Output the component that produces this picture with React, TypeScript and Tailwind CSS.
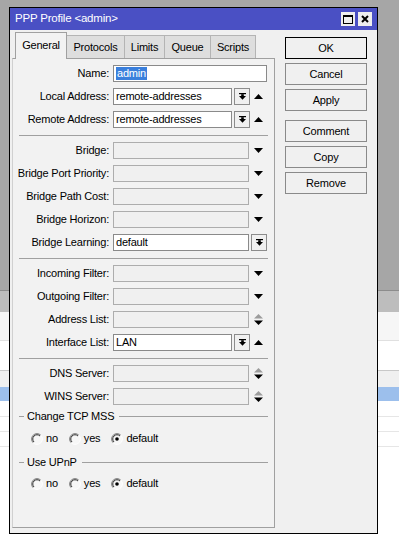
import React from "react";

type Kind = "full" | "comboUp" | "arrowDown" | "upDown" | "combo";

type Row = {
  label: string;
  kind: Kind;
  value?: string;
  white?: boolean;
  selected?: boolean;
};

const sections: Row[][] = [
  [
    { label: "Name:", kind: "full", value: "admin", white: true, selected: true },
    { label: "Local Address:", kind: "comboUp", value: "remote-addresses", white: true },
    { label: "Remote Address:", kind: "comboUp", value: "remote-addresses", white: true },
  ],
  [
    { label: "Bridge:", kind: "arrowDown" },
    { label: "Bridge Port Priority:", kind: "arrowDown" },
    { label: "Bridge Path Cost:", kind: "arrowDown" },
    { label: "Bridge Horizon:", kind: "arrowDown" },
    { label: "Bridge Learning:", kind: "combo", value: "default", white: true },
  ],
  [
    { label: "Incoming Filter:", kind: "arrowDown" },
    { label: "Outgoing Filter:", kind: "arrowDown" },
    { label: "Address List:", kind: "upDown" },
    { label: "Interface List:", kind: "comboUp", value: "LAN", white: true },
  ],
  [
    { label: "DNS Server:", kind: "upDown" },
    { label: "WINS Server:", kind: "upDown" },
  ],
];

const tabs = [
  { name: "General", w: "w-[52px]" },
  { name: "Protocols", w: "w-[58px]" },
  { name: "Limits", w: "w-[40px]" },
  { name: "Queue", w: "w-[46px]" },
  { name: "Scripts", w: "w-[45px]" },
];

function TriDown() {
  return (
    <svg width="9" height="5" viewBox="0 0 9 5">
      <path d="M0 0H9L4.5 5Z" fill="#000" />
    </svg>
  );
}

function TriUp() {
  return (
    <svg width="9" height="5" viewBox="0 0 9 5">
      <path d="M4.5 0L9 5H0Z" fill="#000" />
    </svg>
  );
}

function UpDown() {
  return (
    <svg width="9" height="11" viewBox="0 0 9 11">
      <path d="M4.5 0L9 4.5H0Z" fill="#9c9c9c" />
      <path d="M0 6.5H9L4.5 11Z" fill="#000" />
    </svg>
  );
}

function ComboBtn() {
  return (
    <div className="w-[16px] h-[17px] ml-[2px] border border-[#8c8c8c] bg-[#f0f0f0] flex items-center justify-center shrink-0">
      <svg width="7" height="7" viewBox="0 0 7 7">
        <rect x="0" y="0" width="7" height="1.2" fill="#000" />
        <rect x="2.2" y="1.2" width="2.6" height="2" fill="#000" />
        <path d="M0 3H7L3.5 6.8Z" fill="#000" />
      </svg>
    </div>
  );
}

function Input({ row, width }: { row: Row; width: string }) {
  return (
    <div
      className={`${width} h-[17px] shrink-0 border flex items-center px-[2px] overflow-hidden whitespace-nowrap ${
        row.white ? "bg-white border-[#8a8a8a]" : "bg-[#f0f0f0] border-[#adadad]"
      }`}
    >
      {row.value &&
        (row.selected ? (
          <span className="bg-[#3a7fdc] text-white leading-[13px] px-[1px]">{row.value}</span>
        ) : (
          <span className="text-black">{row.value}</span>
        ))}
    </div>
  );
}

function FieldRow({ row }: { row: Row }) {
  return (
    <div className="flex items-center h-[17px]">
      <div className="w-[96px] text-right text-black whitespace-nowrap">{row.label}</div>
      <div className="ml-[4px] w-[154px] flex items-center">
        {row.kind === "full" && <Input row={row} width="w-[154px]" />}
        {row.kind === "comboUp" && (
          <>
            <Input row={row} width="w-[119px]" />
            <ComboBtn />
            <div className="flex-1 flex justify-center">
              <TriUp />
            </div>
          </>
        )}
        {row.kind === "arrowDown" && (
          <>
            <Input row={row} width="w-[136px]" />
            <div className="flex-1 flex justify-center">
              <TriDown />
            </div>
          </>
        )}
        {row.kind === "upDown" && (
          <>
            <Input row={row} width="w-[136px]" />
            <div className="flex-1 flex justify-center">
              <UpDown />
            </div>
          </>
        )}
        {row.kind === "combo" && (
          <>
            <Input row={row} width="w-[136px]" />
            <ComboBtn />
          </>
        )}
      </div>
    </div>
  );
}

function Radio({ checked }: { checked?: boolean }) {
  return (
    <svg width="12" height="12" viewBox="0 0 12 12" className="shrink-0">
      <circle cx="6" cy="6" r="5" fill="#f7f7f7" />
      <path d="M2.2 9.8A5.3 5.3 0 0 1 9.8 2.2" stroke="#7a7a7a" strokeWidth="1" fill="none" />
      <path d="M3 9A4.2 4.2 0 0 1 9 3" stroke="#303030" strokeWidth="1" fill="none" />
      <path d="M9.8 2.2A5.3 5.3 0 0 1 2.2 9.8" stroke="#ffffff" strokeWidth="1" fill="none" />
      {checked && <circle cx="6" cy="6" r="1.8" fill="#000" />}
    </svg>
  );
}

function GroupHeader({ title }: { title: string }) {
  return (
    <div className="flex items-center h-[13px] ml-[6px] mr-[6px]">
      <div className="w-[5px] h-px bg-[#a0a0a0]" />
      <span className="ml-[3px] text-black whitespace-nowrap">{title}</span>
      <div className="flex-1 h-px bg-[#a0a0a0] ml-[5px]" />
    </div>
  );
}

function RadioRow() {
  const opts = [
    { t: "no", c: false },
    { t: "yes", c: false },
    { t: "default", c: true },
  ];
  return (
    <div className="flex items-center h-[13px] pl-[18px] gap-[11px]">
      {opts.map((o) => (
        <div key={o.t} className="flex items-center gap-[3px]">
          <Radio checked={o.c} />
          <span className="text-black">{o.t}</span>
        </div>
      ))}
    </div>
  );
}

function Separator() {
  return (
    <div className="h-[2px] ml-[6px] mr-[6px]">
      <div className="h-px mt-px bg-[#a0a0a0]" />
    </div>
  );
}

function Button({ label, def }: { label: string; def?: boolean }) {
  return (
    <div
      className={`h-[22px] flex items-center justify-center bg-[#f0f0f0] text-black border ${
        def ? "border-black" : "border-[#8a8a8a]"
      }`}
    >
      {label}
    </div>
  );
}

export default function App() {
  return (
    <div className="relative w-[399px] h-[550px] overflow-hidden bg-white font-['Liberation_Sans',Arial,sans-serif] text-[11px] tracking-[-0.2px]">
      {/* list view behind the dialog */}
      <div className="h-[290px] bg-[#a6a6a6]" />
      <div className="h-[22px] bg-[#bdbdbd] border-t border-[#8c8c8c]" />
      <div className="h-[29px] bg-[#f6f6f6] border-b border-[#e0e0e0]" />
      <div className="h-[30px] bg-white border-b border-[#c8c8c8]" />
      <div className="h-[16px] bg-[#f0f0f0]" />
      <div className="h-[14px] bg-[#9cbfec]" />
      <div className="h-[16px] bg-white border-b border-[#e6e6e6]" />
      <div className="h-[15px] bg-white border-b border-[#e6e6e6]" />
      <div className="h-[15px] bg-white border-b border-[#e6e6e6]" />

      {/* dialog window */}
      <div className="absolute left-[9px] top-[7px] w-[369px] h-[527px] border border-black bg-[#f0f0f0] flex flex-col">
        <div className="h-[22px] bg-[#4a50c4] flex items-center pl-[5px] pr-[5px]">
          <span className="text-white text-[11.5px]">PPP Profile &lt;admin&gt;</span>
          <div className="ml-auto flex gap-[3px]">
            <div className="w-[14px] h-[14px] bg-[#eeeeee] flex items-center justify-center">
              <svg width="10" height="9" viewBox="0 0 10 9">
                <rect x="0.5" y="0.5" width="9" height="8" fill="none" stroke="#000" strokeWidth="1" />
                <rect x="0" y="0" width="10" height="2" fill="#000" />
              </svg>
            </div>
            <div className="w-[14px] h-[14px] bg-[#eeeeee] flex items-center justify-center">
              <svg width="8" height="8" viewBox="0 0 8 8">
                <path d="M1 1L7 7M7 1L1 7" stroke="#000" strokeWidth="2" />
              </svg>
            </div>
          </div>
        </div>

        <div className="flex flex-1">
          {/* tabs + panel */}
          <div className="ml-[2px] w-[263px] flex flex-col">
            <div className="h-[28px] pl-[3px] flex items-end">
              {tabs.map((t, i) =>
                i === 0 ? (
                  <div
                    key={t.name}
                    className={`${t.w} h-[27px] -mb-px relative z-10 bg-[#f2f2f2] border-l border-t border-r border-[#a0a0a0] flex items-center justify-center pb-[2px] text-black`}
                  >
                    {t.name}
                  </div>
                ) : (
                  <div
                    key={t.name}
                    className={`${t.w} h-[23px] bg-[#dedede] border-t border-r border-[#b4b4b4] flex items-center justify-center text-black`}
                  >
                    {t.name}
                  </div>
                )
              )}
            </div>
            <div className="h-[470px] border border-[#a0a0a0] border-l-[#d0d0d0] bg-[#f2f2f2] pt-[6px]">
              <div className="flex flex-col gap-[6px]">
                {sections.map((sec, si) => (
                  <React.Fragment key={si}>
                    {si > 0 && <Separator />}
                    {sec.map((r) => (
                      <FieldRow key={r.label} row={r} />
                    ))}
                  </React.Fragment>
                ))}
              </div>
              <div className="mt-[5px]">
                <GroupHeader title="Change TCP MSS" />
              </div>
              <div className="mt-[9px]">
                <RadioRow />
              </div>
              <div className="mt-[11px]">
                <GroupHeader title="Use UPnP" />
              </div>
              <div className="mt-[8px]">
                <RadioRow />
              </div>
            </div>
          </div>

          {/* buttons */}
          <div className="ml-[10px] w-[82px] pt-[7px] flex flex-col gap-[4px]">
            <Button label="OK" def />
            <Button label="Cancel" />
            <Button label="Apply" />
            <div className="mt-[5px]">
              <Button label="Comment" />
            </div>
            <Button label="Copy" />
            <Button label="Remove" />
          </div>
        </div>
      </div>
    </div>
  );
}
